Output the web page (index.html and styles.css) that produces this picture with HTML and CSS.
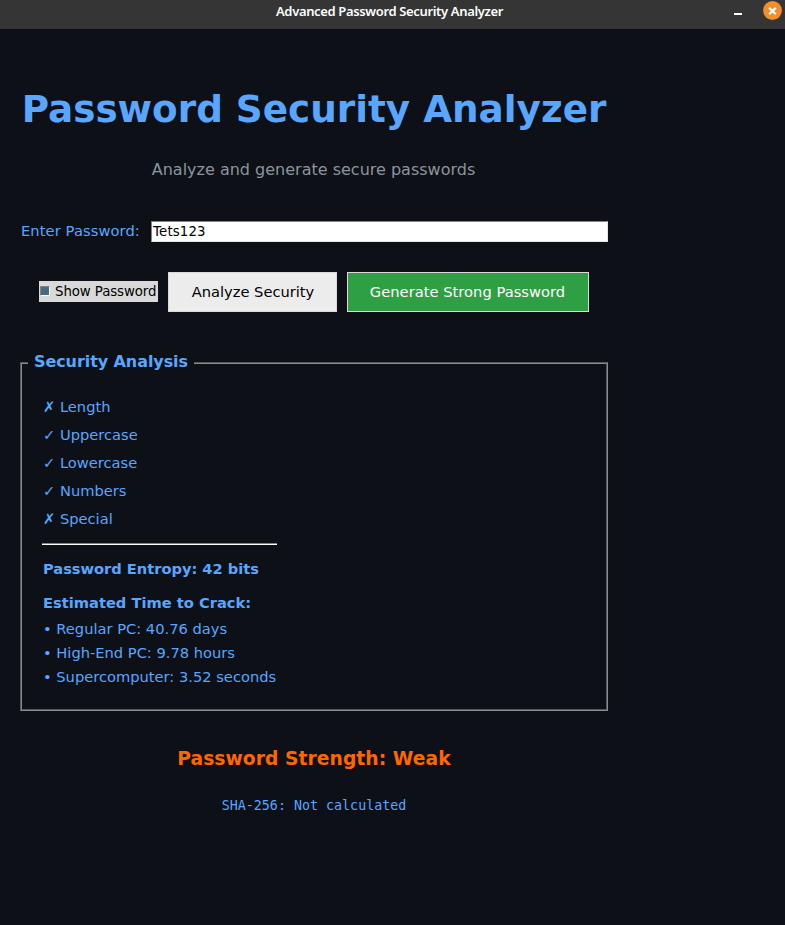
FILE: index.html
```html
<!DOCTYPE html>
<html lang="en">
<head>
<meta charset="utf-8">
<title>Advanced Password Security Analyzer</title>
<link rel="stylesheet" href="styles.css">
</head>
<body>
<header class="titlebar">
  <span class="window-title">Advanced Password Security Analyzer</span>
  <div class="controls">
    <span class="minimize"></span>
    <svg class="close" width="19" height="19" viewBox="0 0 19 19"><circle cx="9.5" cy="9.5" r="9.4" fill="#f08f2c"/><path d="M6.2 6.7l6.6 6.6M12.8 6.7l-6.6 6.6" stroke="#fff" stroke-width="2.2"/></svg>
  </div>
</header>
<main class="app">
  <h1>Password Security Analyzer</h1>
  <p class="subtitle">Analyze and generate secure passwords</p>
  <div class="entry"><label for="pw">Enter Password:</label><input id="pw" type="text" value="Tets123"></div>
  <div class="actions">
    <div class="show"><span class="check"></span><span class="show-label">Show Password</span></div>
    <button class="analyze">Analyze Security</button>
    <button class="generate">Generate Strong Password</button>
  </div>
  <section class="panel"><div class="panel-inner">
    <h2><span>Security Analysis</span></h2>
    <ul class="rules">
      <li>✗ Length</li><li>✓ Uppercase</li><li>✓ Lowercase</li><li>✓ Numbers</li><li>✗ Special</li>
    </ul>
    <div class="rule"></div>
    <p class="entropy">Password Entropy: 42 bits</p>
    <p class="crack">Estimated Time to Crack:</p>
    <ul class="times">
      <li>• Regular PC: 40.76 days</li><li>• High-End PC: 9.78 hours</li><li>• Supercomputer: 3.52 seconds</li>
    </ul>
  </div></section>
  <p class="strength">Password Strength: Weak</p>
  <p class="hash">SHA-256: Not calculated</p>
</main>
</body>
</html>
```
FILE: styles.css
```css
* { box-sizing: border-box; }
body { margin: 0; height: 925px; overflow: hidden; background: #0d1117; color: #58a6ff; font: 14.67px/20px "DejaVu Sans", sans-serif; }
h1, h2, p, ul { margin: 0; padding: 0; }
ul { list-style: none; }
.titlebar { display: grid; grid-template-columns: 1fr auto 1fr; height: 29px; background: #353535; color: #fff; }
.window-title { grid-column: 2; margin-left: -6px; font: 600 13px/22px "Noto Sans", sans-serif; letter-spacing: -0.35px; }
.controls { display: flex; justify-content: flex-end; padding: 1px 4px 0 0; gap: 21px; }
.minimize { width: 8px; height: 2px; margin-top: 12px; background: #fff; }
.close { margin-right: -1px; }
.app { width: 588px; margin-left: 20px; padding-top: 57px; }
h1 { font-size: 37.33px; line-height: 46px; text-align: center; white-space: nowrap; }
.subtitle { margin-top: 28px; margin-left: -1px; font-size: 16px; text-align: center; color: #8b949e; }
.entry { display: flex; align-items: center; margin: 41px 0 0 1px; height: 21px; }
.entry label { width: 130px; margin-top: -2px; letter-spacing: 0.1px; }
.entry input { width: 457px; height: 21px; padding: 0 1px; border: 1px solid; border-color: #828282 #e4e4e4 #e4e4e4 #828282; border-radius: 0; background: #fff; color: #000; font: 13.33px "DejaVu Sans", sans-serif; letter-spacing: 0.15px; outline: 0; }
.actions { display: flex; align-items: center; gap: 10px; margin: 30px 0 0 19px; height: 40px; }
.show { display: flex; align-items: center; gap: 5px; width: 119px; height: 21px; margin-top: -2px; padding-left: 1px; background: #d9d9d9; color: #000; font-size: 13.33px; white-space: nowrap; }
.show-label { padding-top: 2px; letter-spacing: -0.08px; }
.check { width: 10px; height: 10px; background: #4a6984; border: 1px solid; border-color: #828282 #fff #fff #828282; }
button { height: 40px; margin: 0; padding: 0 0 2px; border: 1px solid #d9d9d9; border-radius: 0; font: 14.67px "DejaVu Sans", sans-serif; }
.analyze { width: 169px; padding-left: 1px; background: #ececec; color: #000; }
.generate { width: 242px; padding-right: 1px; background: #2ea043; color: #fff; letter-spacing: 0.03px; }
.panel { margin-top: 50px; height: 349px; border: 1px solid; border-color: #56595c #8b8b8b #8b8b8b #56595c; }
.panel-inner { height: 100%; border: 1px solid; border-color: #8b8b8b #56595c #56595c #8b8b8b; padding: 0 20px 0 21px; }
h2 { height: 20px; margin: -12px 0 0 -15px; font-size: 16px; line-height: 20px; }
h2 span { display: inline-block; padding: 0 6px; background: #0d1117; letter-spacing: -0.08px; }
.rules { margin-top: 21px; }
.rules li { height: 28px; line-height: 28px; }
.rule { width: 235px; height: 2px; margin: 10px 0 0 -1px; border-top: 1px solid #828282; background: #fff; }
.entropy { margin-top: 14px; font-weight: bold; letter-spacing: -0.03px; }
.crack { margin-top: 14px; font-weight: bold; }
.times { margin-top: 4px; }
.times li { height: 24px; line-height: 24px; }
.strength { margin-top: 35px; font-size: 18.67px; line-height: 26px; font-weight: bold; text-align: center; color: #ff6600; letter-spacing: 0.08px; }
.hash { margin-top: 24px; font: 13.33px/20px "DejaVu Sans Mono", monospace; text-align: center; }
```
